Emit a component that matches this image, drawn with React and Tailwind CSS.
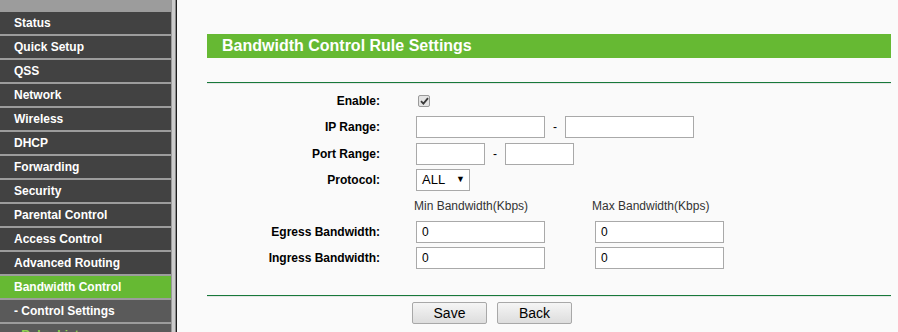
const menu = [
  'Status',
  'Quick Setup',
  'QSS',
  'Network',
  'Wireless',
  'DHCP',
  'Forwarding',
  'Security',
  'Parental Control',
  'Access Control',
  'Advanced Routing',
];

function TextBox({ width, value = '' }) {
  return (
    <div
      className="h-[22px] border border-[#a9a9a9] bg-white pl-[5px] flex items-center text-[12px] text-black"
      style={{ width }}
    >
      {value}
    </div>
  );
}

function Row({ label, children, className = 'h-[26px]' }) {
  return (
    <div className={`flex items-center ${className}`}>
      <div className="w-[174px] pr-[1px] text-right text-[12px] font-bold text-black">{label}</div>
      <div className="ml-[35px] flex items-center">{children}</div>
    </div>
  );
}

function Button({ children }) {
  return (
    <button className="w-[75px] h-[22px] border border-[#a8a8a8] rounded-[2px] bg-gradient-to-b from-[#f5f5f5] to-[#dddddd] text-[14px] text-black leading-none">
      {children}
    </button>
  );
}

export default function App() {
  return (
    <div className="w-[898px] h-[332px] overflow-hidden flex bg-[#fafafa] font-['Liberation_Sans',Arial,sans-serif]">
      {/* left menu */}
      <div className="w-[171px] shrink-0 bg-[#9c9c9c] pt-[12px] flex flex-col gap-[2px]">
        {menu.map((m) => (
          <div key={m} className="h-[22px] shrink-0 bg-[#424242] pl-[14px] flex items-center text-[12px] font-bold text-white">
            {m}
          </div>
        ))}
        <div className="h-[22px] shrink-0 bg-[#66b933] pl-[14px] flex items-center text-[12px] font-bold text-white">
          Bandwidth Control
        </div>
        <div className="h-[22px] shrink-0 bg-[#5a5a5a] pl-[14px] flex items-center text-[12px] font-bold text-white">
          - Control Settings
        </div>
        <div className="h-[22px] shrink-0 bg-[#5a5a5a] pl-[14px] flex items-center text-[12px] font-bold text-[#8fd14f]">
          - Rules List
        </div>
      </div>
      <div className="w-[4px] shrink-0 border-l border-[#999] bg-[#cbcbcb]" />
      <div className="w-[2px] shrink-0 border-l border-[#8a8a8a] bg-[#1e1e1e]" />

      {/* content */}
      <div className="flex-1 pl-[30px] pr-[7px] pt-[34px]">
        <div className="h-[24px] bg-[#66b933] pl-[15px] flex items-center text-[16px] font-bold text-white">
          Bandwidth Control Rule Settings
        </div>
        <div className="mt-[24px] h-[1px] bg-[#17793a]" />
        <div className="h-[1px] bg-[#e6e6e6]" />

        <div className="pt-[6px]">
          <Row label="Enable:" className="h-[22px]">
            <div className="ml-[2px] w-[12px] h-[12px] border border-[#9a9a9a] rounded-[2px] bg-[#e4e4e4] flex items-center justify-center">
              <svg width="9" height="8" viewBox="0 0 9 8">
                <path d="M1 4.2 L3.4 6.6 L8 1.2" fill="none" stroke="#3a3a3a" strokeWidth="1.8" />
              </svg>
            </div>
          </Row>
          <Row label="IP Range:" className="h-[30px]">
            <TextBox width={129} />
            <span className="mx-[8px] text-[12px] text-black w-[4px]">-</span>
            <TextBox width={129} />
          </Row>
          <Row label="Port Range:" className="h-[24px]">
            <TextBox width={69} />
            <span className="mx-[8px] text-[12px] text-black w-[4px]">-</span>
            <TextBox width={69} />
          </Row>
          <Row label="Protocol:" className="h-[28px]">
            <div className="w-[54px] h-[22px] border border-[#a9a9a9] bg-white pl-[5px] pr-[4px] flex items-center justify-between text-[13px] text-black">
              <span>ALL</span>
              <span className="text-[9px]">▼</span>
            </div>
          </Row>
          <div className="flex items-center h-[24px]">
            <div className="ml-[207px] w-[178px] text-[12px] text-[#333]">Min Bandwidth(Kbps)</div>
            <div className="text-[12px] text-[#333]">Max Bandwidth(Kbps)</div>
          </div>
          <Row label="Egress Bandwidth:" className="h-[27px]">
            <TextBox width={129} value="0" />
            <div className="w-[50px]" />
            <TextBox width={129} value="0" />
          </Row>
          <Row label="Ingress Bandwidth:" className="h-[26px]">
            <TextBox width={129} value="0" />
            <div className="w-[50px]" />
            <TextBox width={129} value="0" />
          </Row>
        </div>

        <div className="mt-[24px] h-[1px] bg-[#17793a]" />
        <div className="h-[1px] bg-[#e6e6e6]" />
        <div className="mt-[5px] pl-[205px] flex gap-[10px]">
          <Button>Save</Button>
          <Button>Back</Button>
        </div>
      </div>
    </div>
  );
}
